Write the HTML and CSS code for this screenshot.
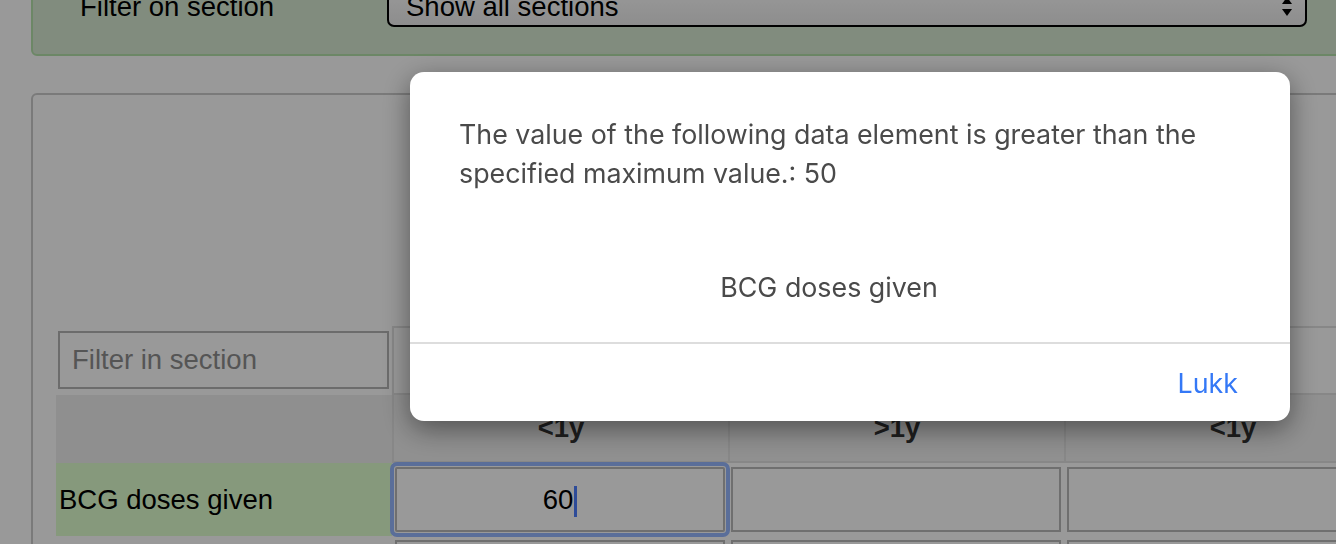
FILE: index.html
```html
<!DOCTYPE html>
<html>
<head>
<meta charset="utf-8">
<link rel="stylesheet" href="styles.css">
</head>
<body>
<div class="page">
  <div class="filter-bar">
    <span class="filter-label">Filter on section</span>
    <div class="select">
      <span>Show all sections</span>
      <svg class="select-arrows" width="12" height="24" viewBox="0 0 12 24"><path d="M6 2 L11 9 L1 9 Z" fill="#000"/><path d="M1 14 L11 14 L6 21 Z" fill="#000"/></svg>
    </div>
  </div>
  <div class="section-box">
    <table class="form-table">
      <colgroup><col class="c-label"><col class="c-data"><col class="c-data"><col class="c-data"><col class="c-data"></colgroup>
      <tr class="hdr1">
        <td class="filter-cell"><div class="filter-input">Filter in section</div></td>
        <th colspan="2">Fixed</th>
        <th colspan="2">Outreach</th>
      </tr>
      <tr class="hdr2">
        <td class="blank"></td>
        <th>&lt;1y</th>
        <th>&gt;1y</th>
        <th>&lt;1y</th>
        <th>&gt;1y</th>
      </tr>
      <tr class="row">
        <td class="label green">BCG doses given</td>
        <td class="inp"><div class="cell focus">60<span class="caret"></span></div></td>
        <td class="inp"><div class="cell"></div></td>
        <td class="inp"><div class="cell"></div></td>
        <td class="inp"><div class="cell"></div></td>
      </tr>
      <tr class="row">
        <td class="label">Measles doses given</td>
        <td class="inp"><div class="cell"></div></td>
        <td class="inp"><div class="cell"></div></td>
        <td class="inp"><div class="cell"></div></td>
        <td class="inp"><div class="cell"></div></td>
      </tr>
    </table>
  </div>
</div>
<div class="backdrop"></div>
<div class="modal">
  <div class="modal-body">
    <p class="msg">The value of the following data element is greater than the specified maximum value.: 50</p>
    <p class="elem">BCG doses given</p>
  </div>
  <div class="modal-footer">
    <span class="close-btn">Lukk</span>
  </div>
</div>
</body>
</html>
```
FILE: styles.css
```css
html, body {
  margin: 0;
  padding: 0;
  overflow: hidden;
  background: #fff;
  width: 1336px;
  height: 544px;
}
body {
  font-family: "Liberation Sans", Arial, sans-serif;
  font-size: 27.5px;
  color: #000;
}
.page {
  padding-left: 31px;
}
.filter-bar {
  margin-top: -29px;
  width: 1340px;
  box-sizing: border-box;
  display: flex;
  align-items: center;
  background: #d7e9d2;
  border: 2px solid #b4e1aa;
  border-radius: 6px;
  padding: 14px 0 27px 47px;
}
.filter-label {
  width: 307px;
  line-height: 30px;
  flex: none;
  white-space: nowrap;
}
.select {
  width: 920px;
  height: 40px;
  box-sizing: border-box;
  border: 2px solid #000;
  border-radius: 7px;
  background: linear-gradient(#ffffff, #ececec);
  display: flex;
  align-items: center;
  justify-content: space-between;
  padding: 0 12px 0 17px;
  line-height: 30px;
}
.select-arrows {
  display: block;
}
.section-box {
  margin-top: 37px;
  width: 1340px;
  height: 500px;
  box-sizing: border-box;
  border: 2px solid #cccccc;
  border-radius: 6px;
  padding: 231px 0 0 23px;
}
.form-table {
  border-collapse: separate;
  border-spacing: 0;
  table-layout: fixed;
  width: 1680px;
}
.c-label { width: 336px; }
.c-data { width: 336px; }
.form-table td, .form-table th {
  padding: 0;
}
.hdr1 th {
  height: 65px;
  border-top: 2px solid #e2e2e2;
  border-bottom: 2px solid #e2e2e2;
  border-left: 2px solid #e2e2e2;
  font-weight: bold;
  color: #333;
  text-align: center;
}
.hdr1 td {
  vertical-align: top;
}
.filter-input {
  margin: 5px 3px 0 2px;
  height: 58px;
  box-sizing: border-box;
  border: 2px solid #b4b4b4;
  color: #8e8e8e;
  padding-left: 12px;
  line-height: 54px;
}
.hdr2 td.blank {
  background: #efefef;
  height: 68px;
}
.hdr2 th {
  height: 66px;
  background: #f0f0f0;
  border-left: 2px solid #e2e2e2;
  border-bottom: 2px solid #e2e2e2;
  font-weight: bold;
  color: #333;
  text-align: center;
  vertical-align: middle;
}
.row td.label {
  padding-left: 3px;
  width: 333px;
  white-space: nowrap;
}
.row td.green {
  background: #dfffcf;
}
.row td.inp {
  padding: 4px 3px 4px 3px;
}
.cell {
  height: 65px;
  box-sizing: border-box;
  border: 2px solid #b9b9b9;
  text-align: center;
  line-height: 61px;
}
.cell.focus {
  outline: 4px solid #96b7ff;
  outline-offset: 1px;
  border-radius: 2px;
}
.caret {
  display: inline-block;
  width: 3px;
  height: 31px;
  background: #4d7fff;
  vertical-align: middle;
  margin-left: 1px;
}
.backdrop {
  position: fixed;
  inset: 0;
  background: rgba(0, 0, 0, 0.4);
}
.modal {
  position: fixed;
  left: 410px;
  top: 72px;
  width: 880px;
  height: 349px;
  background: #fff;
  border-radius: 14px;
  box-shadow: 0 8px 28px rgba(0, 0, 0, 0.45);
  display: flex;
  flex-direction: column;
  font-family: Inter, "Liberation Sans", sans-serif;
  color: #4a4a4a;
  font-size: 26.8px;
}
.modal-body {
  padding: 43px 0 0 49px;
  flex: 1;
}
.modal-body p {
  margin: 0;
  line-height: 39px;
  width: 740px;
}
.elem {
  margin-top: 75px !important;
  text-align: center;
}
.modal-footer {
  height: 77px;
  border-top: 2px solid #dddddd;
  display: flex;
  align-items: center;
  justify-content: flex-end;
  padding-right: 52px;
}
.close-btn {
  color: #3478f6;
}
```
